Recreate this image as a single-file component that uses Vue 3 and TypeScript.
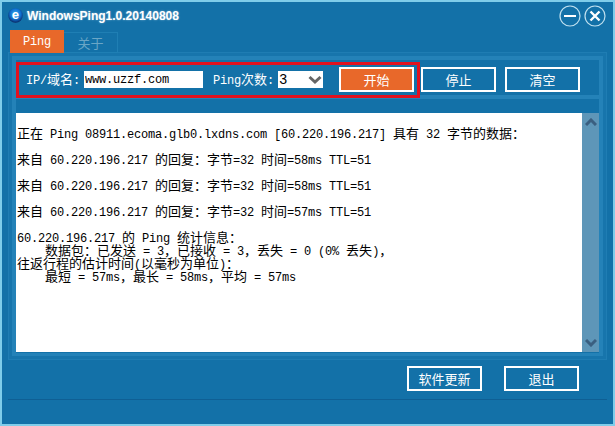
<script setup lang="ts">
interface Seg { t: string; cjk: boolean }

function split(text: string): Seg[] {
  const parts = text.match(/[\x00-\x7f]+|[^\x00-\x7f]+/g) ?? []
  return parts.map((t) => ({ t, cjk: t.charCodeAt(0) > 127 }))
}

const logLines: string[] = [
  '',
  '正在 Ping 08911.ecoma.glb0.lxdns.com [60.220.196.217] 具有 32 字节的数据：',
  '',
  '来自 60.220.196.217 的回复：字节=32 时间=58ms TTL=51',
  '',
  '来自 60.220.196.217 的回复：字节=32 时间=58ms TTL=51',
  '',
  '来自 60.220.196.217 的回复：字节=32 时间=57ms TTL=51',
  '',
  '60.220.196.217 的 Ping 统计信息：',
  '    数据包：已发送 = 3，已接收 = 3，丢失 = 0 (0% 丢失)，',
  '往返行程的估计时间(以毫秒为单位)：',
  '    最短 = 57ms，最长 = 58ms，平均 = 57ms',
]
const log = logLines.map(split)
const ipLabel = split('IP/域名:')
const countLabel = split('Ping次数:')
</script>

<template>
  <div class="window">
    <header class="titlebar">
      <svg class="logo" width="15" height="15" viewBox="0 0 16 16">
        <defs>
          <radialGradient id="orb" cx="50%" cy="40%" r="60%">
            <stop offset="0" stop-color="#3fb4f2" />
            <stop offset="0.6" stop-color="#0f6fd0" />
            <stop offset="1" stop-color="#0a2560" />
          </radialGradient>
        </defs>
        <circle cx="8" cy="8" r="7.8" fill="url(#orb)" />
        <text x="8" y="12" text-anchor="middle" class="logo-e">e</text>
      </svg>
      <span class="title">WindowsPing1.0.20140808</span>
      <div class="win-btns">
        <button class="round">
          <svg width="22" height="22" viewBox="0 0 22 22">
            <circle cx="11" cy="11" r="10" fill="none" stroke="#bfe0ef" stroke-width="1.2" />
            <path d="M5 11h12" stroke="#fff" stroke-width="2" />
          </svg>
        </button>
        <button class="round">
          <svg width="22" height="22" viewBox="0 0 22 22">
            <circle cx="11" cy="11" r="10" fill="none" stroke="#bfe0ef" stroke-width="1.2" />
            <path d="M6.5 6.5l9 9M15.5 6.5l-9 9" stroke="#fff" stroke-width="2.4" />
          </svg>
        </button>
      </div>
    </header>

    <nav class="tabs">
      <div class="tab active"><span class="lat">Ping</span></div>
      <div class="tab idle">关于</div>
    </nav>

    <section class="panel">
      <div class="group toolbar">
        <label class="label lbl-ip">
          <template v-for="(s, i) in ipLabel" :key="i"><span :class="s.cjk ? 'cjk' : 'lat'">{{ s.t }}</span></template>
        </label>
        <input class="ip lat" value="www.uzzf.com" />
        <label class="label lbl-count">
          <template v-for="(s, i) in countLabel" :key="i"><span :class="s.cjk ? 'cjk' : 'lat'">{{ s.t }}</span></template>
        </label>
        <div class="select">
          <span class="select-value">3</span>
          <svg width="14" height="10" viewBox="0 0 14 10">
            <path d="M1.5 2l5.5 5 5.5-5" fill="none" stroke="#666" stroke-width="3" />
          </svg>
        </div>
        <button class="btn primary start">开始</button>
        <button class="btn stop">停止</button>
        <button class="btn clear">清空</button>
        <div class="highlight"></div>
      </div>

      <div class="group output">
        <div class="log">
          <div v-for="(line, n) in log" :key="n" class="line">
            <template v-for="(s, i) in line" :key="i"><span :class="s.cjk ? 'cjk' : 'lat'">{{ s.t }}</span></template>
          </div>
        </div>
        <div class="scrollbar">
          <svg width="12" height="8" viewBox="0 0 12 8">
            <path d="M1 7l5-5 5 5" fill="none" stroke="#3a5f80" stroke-width="3" />
          </svg>
          <svg width="12" height="8" viewBox="0 0 12 8">
            <path d="M1 1l5 5 5-5" fill="none" stroke="#3a5f80" stroke-width="3" />
          </svg>
        </div>
      </div>
    </section>

    <footer class="footer">
      <button class="btn update">软件更新</button>
      <button class="btn quit">退出</button>
    </footer>
    <div class="statusbar"></div>
  </div>
</template>

<style>
html, body { margin: 0; padding: 0; background: #7fcdea; }
</style>

<style scoped>
.window {
  box-sizing: border-box;
  width: 615px;
  height: 426px;
  border: 2px solid #7fcdea;
  background: #1371a8;
  display: flex;
  flex-direction: column;
  overflow: hidden;
  color: #fff;
  font-family: "Noto Sans CJK SC", "Liberation Sans", sans-serif;
  font-size: 13px;
}
.titlebar {
  height: 28px;
  display: flex;
  align-items: center;
  padding-left: 6px;
  flex: none;
}
.logo { flex: none; margin-top: -1px; }
.logo-e { font: bold 14px "Liberation Sans", sans-serif; fill: #fff; }
.title {
  margin-left: 4px;
  font: bold 12px "Liberation Sans", sans-serif;
  text-shadow: 0 0 2px rgba(255, 255, 255, 0.5);
}
.win-btns {
  margin-left: auto;
  margin-right: 7px;
  display: flex;
  gap: 3px;
}
.round {
  width: 22px;
  height: 22px;
  padding: 0;
  border: 0;
  background: none;
  display: block;
}
.round svg { display: block; }
.tabs {
  height: 22px;
  flex: none;
  display: flex;
  padding-left: 8px;
  position: relative;
  z-index: 1;
}
.tab {
  box-sizing: border-box;
  width: 54px;
  display: flex;
  align-items: center;
  justify-content: center;
}
.tab.active {
  height: 23px;
  background: #e8682a;
  color: #fff;
}
.tab.idle {
  height: 21px;
  margin-top: 2px;
  border: 1px solid #1f7fb4;
  border-left: 0;
  color: #6aa6c6;
}
.lat {
  font-family: "Liberation Mono", monospace;
  font-size: 12px;
  letter-spacing: -0.2px;
  white-space: pre;
}
.cjk { white-space: pre; font-size: 13px; }
.panel {
  box-sizing: border-box;
  height: 308px;
  margin: 0 6px;
  flex: none;
  border: 1px solid #1f7db3;
  background: #1775ac;
  padding: 3px;
  display: flex;
  flex-direction: column;
}
.group {
  box-sizing: border-box;
  border: 4px solid #2482b8;
  background: #1371a8;
  flex: none;
}
.toolbar {
  height: 41px;
  border-bottom-width: 2px;
  display: flex;
  align-items: center;
  position: relative;
  padding: 4px 0 0 10px;
}
.label { line-height: 17px; flex: none; }
.lbl-ip { width: 58px; }
.ip {
  box-sizing: border-box;
  width: 119px;
  height: 17px;
  border: 0;
  padding: 0 1px;
  background: #fff;
  color: #000;
  outline: none;
  flex: none;
}
.lbl-count { margin-left: 10px; width: 65px; }
.select {
  box-sizing: border-box;
  width: 45px;
  height: 17px;
  background: #fff;
  color: #000;
  display: flex;
  align-items: center;
  justify-content: space-between;
  padding: 0 1px 0 1px;
  font: 14px "Liberation Mono", monospace;
  flex: none;
}
.btn {
  box-sizing: border-box;
  width: 75px;
  height: 25px;
  border: 2px solid #fff;
  background: transparent;
  color: #fff;
  padding: 0;
  font: 13px "Noto Sans CJK SC", sans-serif;
  line-height: 20px;
  flex: none;
}
.btn.primary { background: #e8682a; }
.start { margin-left: 16px; }
.stop { margin-left: 7px; }
.clear { margin-left: 9px; }
.highlight {
  position: absolute;
  left: 0;
  top: 2px;
  width: 404px;
  height: 36px;
  box-sizing: border-box;
  border: 3px solid #e0111f;
  pointer-events: none;
}
.output {
  height: 259px;
  border-top-width: 2px;
  border-bottom-width: 3px;
  padding: 14px 0 1px;
  display: flex;
}
.log {
  flex: 1;
  background: #fff;
  color: #000;
  padding-left: 1px;
  overflow: hidden;
}
.line { height: 13px; line-height: 13px; white-space: pre; }
.scrollbar {
  width: 17px;
  background: #5e96b8;
  display: flex;
  flex-direction: column;
  justify-content: space-between;
  align-items: center;
  padding: 5px 0;
  box-sizing: border-box;
  flex: none;
}
.scrollbar svg { display: block; }
.footer {
  height: 40px;
  flex: none;
  margin: 0 6px;
  box-sizing: border-box;
  display: flex;
  padding: 6px 0 0 399px;
  gap: 22px;
  border-bottom: 1px solid #0f5f94;
}
.statusbar { flex: 1; }
</style>
